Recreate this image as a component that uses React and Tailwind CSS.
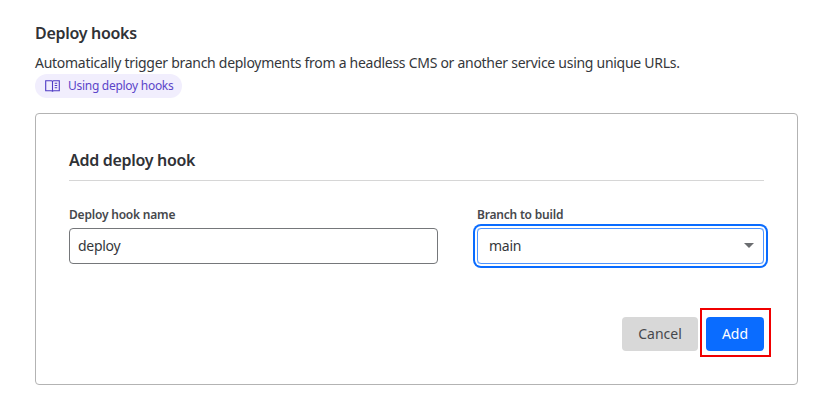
export default function App() {
  return (
    <div className="bg-white w-[828px] h-[403px] overflow-hidden pl-[35px] pr-[30px] pt-[23px] text-[#2f3136] font-['Noto_Sans',sans-serif]">
      <h2 className="text-base font-semibold leading-5 text-[#303236] tracking-[-0.3px]">Deploy hooks</h2>
      <p className="mt-[10px] text-sm leading-5 text-[#35373b] tracking-[-0.28px]">Automatically trigger branch deployments from a headless CMS or another service using unique URLs.</p>
      <a className="mt-px inline-flex items-center gap-2 h-6 rounded-full bg-[#f1eefd] pl-[10px] pr-[9px] text-xs tracking-[-0.28px] text-[#5b45c9]">
        <svg width="15" height="13" viewBox="0 0 15 13" fill="none" stroke="#4f3bc4" strokeWidth="1.1">
          <path d="M.7 .8 H6.5 C7 .8 7.5 1.2 7.5 1.8 C7.5 1.2 8 .8 8.5 .8 H14.3 V10.8 H8.5 C8 10.8 7.5 11.2 7.5 11.8 C7.5 11.2 7 10.8 6.5 10.8 H.7 Z M7.5 1.8 V11.8" />
          <path d="M9.7 3.2 H12.2 M9.7 5.5 H12.2 M9.7 7.8 H12.2" />
        </svg>
        Using deploy hooks
      </a>
      <div className="mt-[14px] h-[272px] rounded border border-[#b3b3b3] px-[33px] pt-[36px]">
        <h3 className="text-base font-semibold leading-5 text-[#303236] tracking-[-0.3px] pb-[10px] border-b border-[#d6d6d6]">Add deploy hook</h3>
        <div className="mt-[26px] flex gap-[39px]">
          <div className="w-[369px]">
            <label className="block text-xs font-semibold leading-4 text-[#46484c] tracking-[-0.2px] mb-[5px]">Deploy hook name</label>
            <div className="h-9 flex items-center rounded border border-[#75777a] px-2 text-sm tracking-[-0.28px] text-[#35373b]">deploy</div>
          </div>
          <div className="w-[287px]">
            <label className="block text-xs font-semibold leading-4 text-[#46484c] tracking-[-0.2px] mb-[5px]">Branch to build</label>
            <div className="h-9 flex items-center justify-between rounded border border-[#4d94ff] ring-2 ring-[#0a6cff] ring-offset-2 pl-[11px] pr-[9px] text-sm tracking-[-0.28px] text-[#35373b]">
              main
              <span className="w-0 h-0 border-x-[5px] border-x-transparent border-t-[5px] border-t-[#6b6d70]" />
            </div>
          </div>
        </div>
        <div className="mt-[53px] flex justify-end gap-2">
          <button className="w-[76px] h-[34px] rounded bg-[#d8d8d8] text-sm text-[#46484c]">Cancel</button>
          <div className="relative">
            <button className="block w-[58px] h-[34px] rounded bg-[#0a6cff] text-sm text-white">Add</button>
            <div className="absolute -left-1.5 -right-[7px] -top-[9px] -bottom-1.5 border-2 border-[#f00000]" />
          </div>
        </div>
      </div>
    </div>
  );
}
